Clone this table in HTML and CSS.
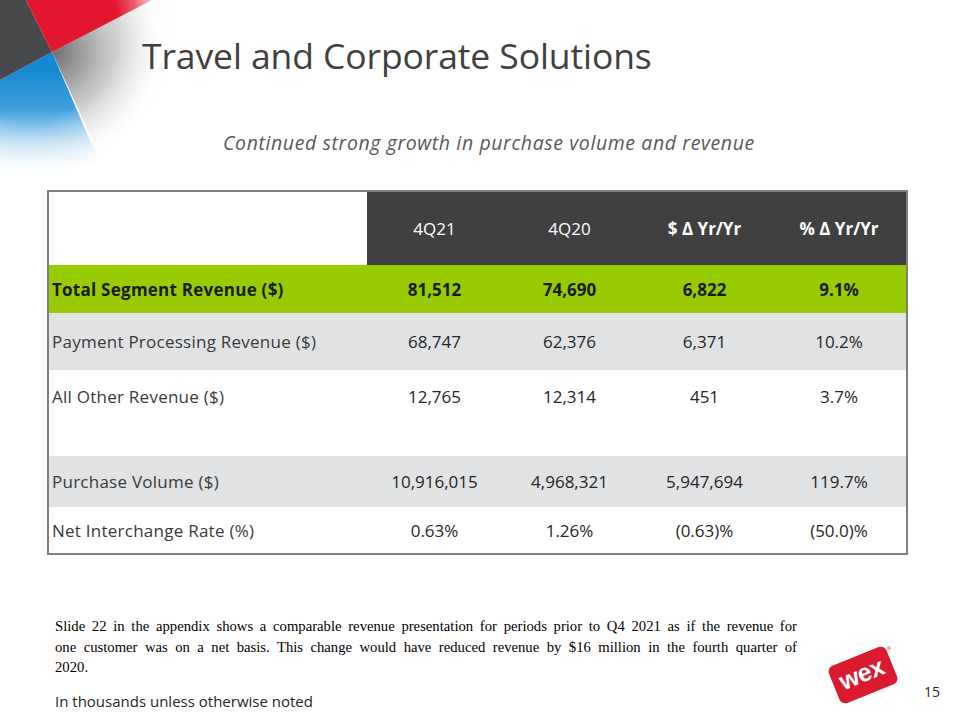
FILE: index.html
```html
<!DOCTYPE html>
<html lang="en">
<head>
<meta charset="utf-8">
<title>Travel and Corporate Solutions</title>
<link rel="stylesheet" href="styles.css">
</head>
<body>
<div class="slide">
  <svg class="deco" width="176" height="178" viewBox="0 0 176 178" aria-hidden="true">
    <defs>
      <linearGradient id="blueG" gradientUnits="userSpaceOnUse" x1="0" y1="70" x2="0" y2="176">
        <stop offset="0" stop-color="#1689d2"/>
        <stop offset="0.35" stop-color="#3d9fdd"/>
        <stop offset="1" stop-color="#ffffff"/>
      </linearGradient>
      <radialGradient id="grayG" gradientUnits="userSpaceOnUse" cx="52" cy="52" r="120">
        <stop offset="0" stop-color="#6e6e70"/>
        <stop offset="0.45" stop-color="#c4c4c4"/>
        <stop offset="0.9" stop-color="#fbfbfb"/>
      </radialGradient>
      <linearGradient id="redG" gradientUnits="userSpaceOnUse" x1="30" y1="0" x2="160" y2="0">
        <stop offset="0" stop-color="#e2172d"/>
        <stop offset="0.8" stop-color="#e2172d"/>
        <stop offset="1" stop-color="#f07b87"/>
      </linearGradient>
      <radialGradient id="fade" gradientUnits="userSpaceOnUse" cx="30" cy="30" r="160">
        <stop offset="0.55" stop-color="#ffffff" stop-opacity="0"/>
        <stop offset="0.95" stop-color="#ffffff" stop-opacity="1"/>
      </radialGradient>
    </defs>
    <rect x="0" y="0" width="168" height="176" fill="#f7f7f7"/>
    <polygon points="52,52 150,0 176,0 176,178 110,178" fill="url(#grayG)"/>
    <polygon points="0,80 52,52 106,178 0,178" fill="url(#blueG)"/>
    <polygon points="0,0 26,0 52,52 0,80" fill="#48494b"/>
    <polygon points="26,0 152,0 52,52" fill="url(#redG)"/>
    <rect x="0" y="0" width="176" height="178" fill="url(#fade)"/>
  </svg>

  <header class="head">
    <h1 class="title">Travel and Corporate Solutions</h1>
    <p class="subtitle">Continued strong growth in purchase volume and revenue</p>
  </header>

  <table class="data">
    <colgroup>
      <col class="c-label">
      <col class="c-num"><col class="c-num"><col class="c-num"><col class="c-num">
    </colgroup>
    <thead>
      <tr class="r-head">
        <th class="blank"></th>
        <th>4Q21</th>
        <th>4Q20</th>
        <th class="strong">$ &#916; Yr/Yr</th>
        <th class="strong">% &#916; Yr/Yr</th>
      </tr>
    </thead>
    <tbody>
      <tr class="r-total">
        <td class="lbl">Total Segment Revenue ($)</td>
        <td>81,512</td><td>74,690</td><td>6,822</td><td>9.1%</td>
      </tr>
      <tr class="r-gray r-ppr">
        <td class="lbl">Payment Processing Revenue ($)</td>
        <td>68,747</td><td>62,376</td><td>6,371</td><td>10.2%</td>
      </tr>
      <tr class="r-other">
        <td class="lbl">All Other Revenue ($)</td>
        <td>12,765</td><td>12,314</td><td>451</td><td>3.7%</td>
      </tr>
      <tr class="r-spacer">
        <td></td><td></td><td></td><td></td><td></td>
      </tr>
      <tr class="r-gray r-pv">
        <td class="lbl">Purchase Volume ($)</td>
        <td>10,916,015</td><td>4,968,321</td><td>5,947,694</td><td>119.7%</td>
      </tr>
      <tr class="r-nir">
        <td class="lbl">Net Interchange Rate (%)</td>
        <td>0.63%</td><td>1.26%</td><td>(0.63)%</td><td>(50.0)%</td>
      </tr>
    </tbody>
  </table>

  <footer class="foot">
    <div class="notes">
      <p class="disclaimer"><span class="jline">Slide 22 in the appendix shows a comparable revenue presentation for periods prior to Q4 2021 as if the revenue for</span> <span class="jline">one customer was on a net basis. This change would have reduced revenue by $16 million in the fourth quarter of</span> <span class="lline">2020.</span></p>
      <p class="units">In thousands unless otherwise noted</p>
    </div>
    <div class="brand">
      <svg class="logo" width="74" height="64" viewBox="0 0 74 64" aria-label="WEX">
        <g transform="rotate(-22 37 32)">
          <rect x="6" y="12" width="62" height="40" rx="6" ry="6" fill="#d91a2f"/>
          <text x="36" y="39" text-anchor="middle" class="logo-text">wex</text>
          <text x="69" y="19" class="logo-reg">®</text>
        </g>
      </svg>
      <span class="pageno">15</span>
    </div>
  </footer>
</div>
</body>
</html>
```

FILE: styles.css
```css
html, body {
  margin: 0;
  padding: 0;
  background: #ffffff;
}

.slide {
  position: relative;
  width: 960px;
  height: 720px;
  overflow: hidden;
  background: #ffffff;
  font-family: "Open Sans", "Noto Sans", sans-serif;
  color: #262626;
}

.deco {
  position: absolute;
  left: 0;
  top: 0;
  z-index: 0;
  display: block;
}

.head {
  position: relative;
  z-index: 1;
  padding-top: 34px;
}

.title {
  margin: 0 0 0 142px;
  font-weight: 400;
  font-size: 35.5px;
  line-height: 42px;
  color: #404040;
  letter-spacing: -0.1px;
}

.subtitle {
  margin: 55px 0 0 223px;
  font-style: italic;
  font-size: 19.5px;
  line-height: 24px;
  color: #595959;
  letter-spacing: 0.6px;
}

.data {
  position: relative;
  z-index: 1;
  margin: 35px 0 0 47px;
  border-collapse: collapse;
  table-layout: fixed;
  width: 861px;
  border: 2px solid #7f7f7f;
  font-size: 17px;
  color: #262626;
}

.c-label { width: 319px; }
.c-num { width: 135px; }

.data th,
.data td {
  padding: 0;
  text-align: center;
  vertical-align: middle;
  white-space: nowrap;
}

.data td.lbl {
  text-align: left;
  padding-left: 3px;
  color: #3a3a3a;
  letter-spacing: 0.25px;
}

.r-head { height: 74px; }
.r-head th {
  background: #404040;
  color: #ffffff;
  font-weight: 400;
}
.r-head th.strong { font-weight: 700; }
.r-head th.blank { background: #ffffff; }

.r-total { height: 48px; background: #99cc00; }
.r-total td,
.r-total td.lbl {
  font-weight: 700;
  color: #1a1a1a;
}

.r-gray { background: #e1e2e4; }
.r-ppr { height: 57px; }
.r-other { height: 53px; }
.r-spacer { height: 33px; }
.r-pv { height: 51px; }
.r-nir { height: 47px; }

.foot {
  display: flex;
  justify-content: space-between;
  align-items: flex-end;
  margin: 0;
  padding: 0 0 0 55px;
}

.notes {
  width: 742px;
}

.disclaimer {
  margin: 61px 0 0 0;
  font-family: "Liberation Serif", "Times New Roman", serif;
  font-size: 14.7px;
  line-height: 20.5px;
  color: #000000;
}

.jline {
  display: block;
  text-align: justify;
  text-align-last: justify;
}

.lline {
  display: block;
  text-align: left;
}

.units {
  margin: 13px 0 0 0;
  font-size: 15px;
  line-height: 20px;
  color: #262626;
}

.brand {
  display: flex;
  align-items: flex-end;
  gap: 24px;
  padding-right: 20px;
  padding-bottom: 8px;
}

.logo {
  display: block;
  margin-bottom: -4px;
}

.logo-text {
  font-family: "Liberation Sans", Arial, sans-serif;
  font-weight: 700;
  font-size: 25px;
  fill: #ffffff;
  letter-spacing: -0.5px;
}

.logo-reg {
  font-family: "Liberation Sans", Arial, sans-serif;
  font-size: 6px;
  fill: #d91a2f;
}

.pageno {
  font-size: 14px;
  line-height: 18px;
  color: #262626;
  margin-bottom: 2px;
}
```
